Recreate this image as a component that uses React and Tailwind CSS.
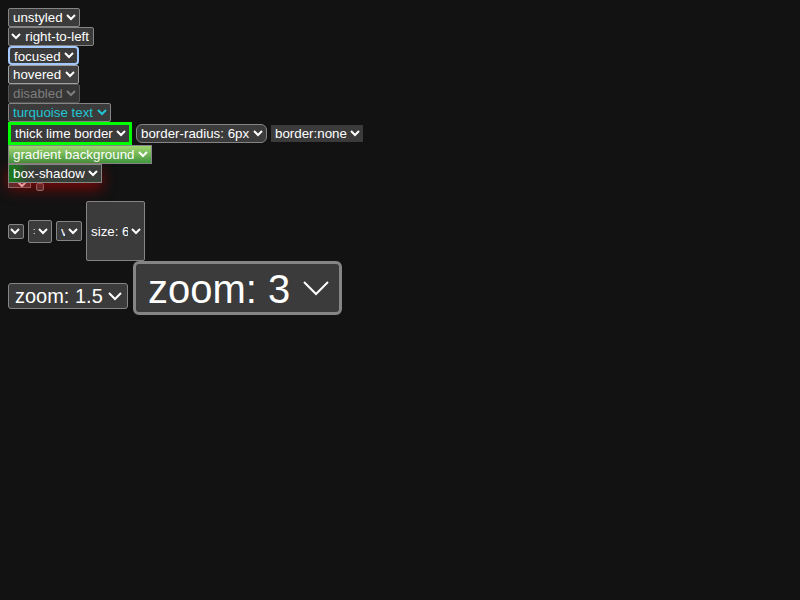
import React from 'react';

// native-looking dark selects, one per line like the original test page
const base =
  "h-[19px] rounded-[2px] border border-[#858585] bg-[#3b3b3b] text-white font-['Liberation_Sans',Arial,sans-serif] text-[13.333px] leading-none";

const Sel = ({ className = '', label, ...rest }) => (
  <select className={className} defaultValue={label} {...rest}>
    <option value={label}>{label}</option>
  </select>
);

export default function App() {
  return (
    <div className="min-h-screen bg-[#121212] p-2 [color-scheme:dark] font-['Liberation_Sans',Arial,sans-serif]">
      <div className="flex flex-col items-start">
        <Sel className={base} label="unstyled" />
        <Sel className={base} label="right-to-left" dir="rtl" />
        <Sel
          className="h-[19px] rounded-[4px] border-2 border-[#a3c9ff] bg-[#3b3b3b] text-white font-['Liberation_Sans',Arial,sans-serif] text-[13.333px] leading-none"
          label="focused"
        />
        <Sel className="h-[19px] rounded-[2px] border border-[#a0a0a0] bg-[#424242] text-white font-['Liberation_Sans',Arial,sans-serif] text-[13.333px] leading-none" label="hovered" />
        <Sel
          className="h-[19px] rounded-[2px] border border-[#555555] bg-[#363636] text-[#7d7d7d] font-['Liberation_Sans',Arial,sans-serif] text-[13.333px] leading-none"
          label="disabled"
          disabled
        />
        <Sel className="h-[19px] rounded-[2px] border border-[#858585] bg-[#3b3b3b] text-[#21c6d4] font-['Liberation_Sans',Arial,sans-serif] text-[13.333px] leading-none" label="turquoise text" />

        <div className="flex items-center gap-1">
          <Sel
            className="h-[23px] border-[3px] border-[#00ff00] bg-[#3b3b3b] text-white font-['Liberation_Sans',Arial,sans-serif] text-[13.333px] leading-none"
            label="thick lime border"
          />
          <Sel
            className="h-[19px] rounded-[6px] border border-[#858585] bg-[#3b3b3b] text-white font-['Liberation_Sans',Arial,sans-serif] text-[13.333px] leading-none"
            label="border-radius: 6px"
          />
          <Sel
            className="h-[17px] bg-[#3b3b3b] text-white font-['Liberation_Sans',Arial,sans-serif] text-[13.333px] leading-none"
            label="border:none"
          />
        </div>

        <Sel
          className="h-[19px] border border-[#858585] bg-linear-to-b from-[#9fd46f] to-[#3f973f] text-white font-['Liberation_Sans',Arial,sans-serif] text-[13.333px] leading-none"
          label="gradient background"
        />
        <Sel
          className="relative z-10 h-[19px] border border-[#858585] bg-[#3b3b3b] text-white font-['Liberation_Sans',Arial,sans-serif] text-[13.333px] leading-none shadow-[inset_18px_0_12px_-6px_#1d7a1d,0_6px_14px_rgba(200,0,0,0.55)]"
          label="box-shadow"
        />

        <div className="-mt-[2px] flex h-[20px] items-start gap-[5px]">
          <Sel
            className="h-[7px] w-[23px] border border-[#858585] bg-[#3b3b3b] text-white font-['Liberation_Sans',Arial,sans-serif] text-[13.333px] leading-none"
            label=""
          />
          <Sel
            className="mt-[2px] h-[8px] w-[8px] rounded-[2px] border border-[#858585] bg-[#3b3b3b] text-white font-['Liberation_Sans',Arial,sans-serif] text-[13.333px] leading-none"
            label=""
          />
        </div>

        <div className="flex items-center">
          <Sel
            className="h-[15px] w-[16px] rounded-[2px] border border-[#858585] bg-[#3b3b3b] text-white font-['Liberation_Sans',Arial,sans-serif] text-[13.333px] leading-none"
            label=""
          />
          <Sel
            className="ml-[4px] h-[23px] w-[24px] rounded-[2px] border border-[#858585] bg-[#3b3b3b] text-white font-['Liberation_Sans',Arial,sans-serif] text-[9px] leading-none"
            label=":"
          />
          <Sel
            className="ml-[4px] h-[20px] w-[26px] rounded-[2px] border border-[#858585] bg-[#3b3b3b] text-white font-['Liberation_Sans',Arial,sans-serif] text-[13.333px] leading-none"
            label="v"
          />
          <Sel
            className="ml-[4px] h-[60px] w-[59px] rounded-[2px] border border-[#858585] bg-[#3b3b3b] text-white font-['Liberation_Sans',Arial,sans-serif] text-[13.333px] leading-none"
            label="size: 6"
          />
        </div>

        <div className="flex items-baseline gap-[5px]">
          <Sel
            className="h-[17.5px] rounded-[2px] border border-[#858585] bg-[#3b3b3b] text-white font-['Liberation_Sans',Arial,sans-serif] text-[13.333px] leading-none [zoom:1.5]"
            label="zoom: 1.5"
          />
          <Sel
            className="h-[18px] rounded-[2px] border border-[#858585] bg-[#3b3b3b] text-white font-['Liberation_Sans',Arial,sans-serif] text-[13.333px] leading-none [zoom:3]"
            label="zoom: 3"
          />
        </div>
      </div>
    </div>
  );
}
